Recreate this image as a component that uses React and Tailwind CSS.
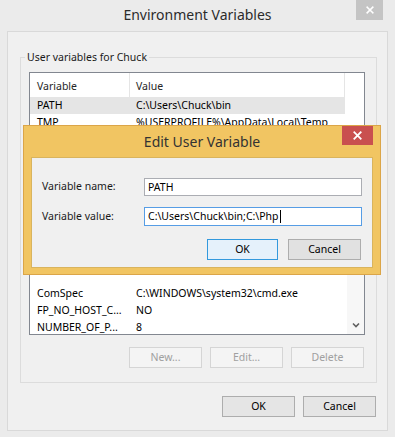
import React from "react";

function XIcon({ size = 9 }) {
  return (
    <svg width={size} height={size} viewBox="0 0 10 10">
      <path d="M1.5 1.5 L8.5 8.5 M8.5 1.5 L1.5 8.5" stroke="white" strokeWidth="2" strokeLinecap="square" />
    </svg>
  );
}

function Row({ name, value, selected }) {
  return (
    <div className={"h-[17px] leading-[17px] flex w-[315px] " + (selected ? "bg-[#e5e5e5]" : "")}>
      <div className="w-[100px] pl-[7px] whitespace-nowrap overflow-hidden">{name}</div>
      <div className="w-[215px] pl-[6px] whitespace-nowrap overflow-hidden">{value}</div>
    </div>
  );
}

function WinButton({ children, disabled, isDefault, className = "" }) {
  let cls = "h-[21px] flex items-center justify-center border ";
  if (disabled) cls += "border-[#d5d5d5] bg-[#f4f4f4] text-[#a0a0a0] ";
  else if (isDefault) cls += "border-[#3c8fd8] bg-[#e5e5e5] text-black ";
  else cls += "border-[#adadad] bg-[#e1e1e1] text-black ";
  return <div className={cls + className}>{children}</div>;
}

export default function App() {
  return (
    <div className="w-[395px] h-[437px] bg-[#ebebeb] relative overflow-hidden font-['Noto_Sans',sans-serif] text-[10.5px] text-black">
      {/* Title bar */}
      <div className="h-[31px] grid grid-cols-[1fr_auto_1fr]">
        <div />
        <div className="pt-[4px] text-[14px] leading-[22px] text-[#2b2b2b]">Environment Variables</div>
        <div className="flex justify-end pr-[12px]">
          <div className="w-[27px] h-[20px] bg-[#c4c4c4] flex items-center justify-center">
            <XIcon size={8} />
          </div>
        </div>
      </div>

      {/* Client area */}
      <div className="mx-[7px] h-[400px] border border-[#d9d9d9] bg-[#f0f0f0] flex flex-col">
        <fieldset className="ml-[12px] mr-[10px] mt-[17px] border border-[#dcdcdc] pl-[8px] pr-[11px] pb-[14px]">
          <legend className="ml-[-4px] px-[2px] leading-[16px] text-[#1a1a1a]">User variables for Chuck</legend>
          <div className="mt-[7px] flex flex-col">
            {/* user variables list */}
            <div className="h-[128px] border-t border-x border-[#828790] bg-white flex flex-col">
              <div className="h-[24px] flex text-[#262626]">
                <div className="w-[100px] pl-[7px] leading-[26px] border-r border-[#e5e5e5]">Variable</div>
                <div className="w-[215px] pl-[6px] leading-[26px] border-r border-[#e5e5e5]">Value</div>
              </div>
              <Row name="PATH" value="C:\Users\Chuck\bin" selected />
              <Row name="TMP" value="%USERPROFILE%\AppData\Local\Temp" />
            </div>
            {/* system variables list (partially hidden) */}
            <div className="h-[135px] border-b border-x border-[#828790] bg-white flex overflow-hidden">
              <div className="flex-1 pt-[85px] flex flex-col">
                <Row name="ComSpec" value="C:\WINDOWS\system32\cmd.exe" />
                <Row name="FP_NO_HOST_C..." value="NO" />
                <Row name="NUMBER_OF_P..." value="8" />
              </div>
              <div className="w-[17px] bg-[#f7f7f7] flex flex-col justify-end">
                <div className="h-[17px] flex items-center justify-center pb-[2px]">
                  <svg width="8" height="6" viewBox="0 0 8 6">
                    <path d="M1 1.5 L4 4.5 L7 1.5" stroke="#606060" strokeWidth="1.6" fill="none" />
                  </svg>
                </div>
              </div>
            </div>
          </div>
          <div className="mt-[12px] flex justify-end gap-[8px] pr-[1px]">
            <WinButton disabled className="w-[73px]">New...</WinButton>
            <WinButton disabled className="w-[73px]">Edit...</WinButton>
            <WinButton disabled className="w-[73px]">Delete</WinButton>
          </div>
        </fieldset>
        <div className="mt-[13px] mr-[11px] flex justify-end gap-[8px]">
          <WinButton className="w-[73px] bg-[#e5e5e5] border-[#acacac]">OK</WinButton>
          <WinButton className="w-[73px] bg-[#e5e5e5] border-[#acacac]">Cancel</WinButton>
        </div>
      </div>

      {/* Edit User Variable dialog */}
      <div className="absolute left-[23px] top-[125px] w-[358px] h-[150px] bg-[#f1c562] border border-[#dba548] flex flex-col">
        <div className="h-[31px] grid grid-cols-[1fr_auto_1fr]">
          <div />
          <div className="pt-[5px] text-[14px] leading-[22px] text-[#333333]">Edit User Variable</div>
          <div className="flex justify-end pr-[7px]">
            <div className="w-[31px] h-[19px] bg-[#c9504f] flex items-center justify-center">
              <XIcon size={9} />
            </div>
          </div>
        </div>
        <div className="mx-[7px] h-[111px] border border-[#d9b45e] bg-[#f0f0f0] flex flex-col px-[10px] pt-[20px]">
          <div className="flex items-center h-[18px]">
            <div className="w-[102px] text-[#1a1a1a]">Variable name:</div>
            <div className="flex-1 h-[18px] border border-[#abadb3] bg-white pl-[3px] leading-[16px]">PATH</div>
          </div>
          <div className="flex items-center h-[19px] mt-[11px]">
            <div className="w-[102px] text-[#1a1a1a]">Variable value:</div>
            <div className="flex-1 h-[19px] border border-[#569de5] bg-white pl-[3px] leading-[17px] flex items-center">
              <span>C:\Users\Chuck\bin;C:\Php</span>
              <span className="w-[1px] h-[13px] bg-black ml-[1px]" />
            </div>
          </div>
          <div className="mt-[13px] flex justify-end gap-[10px] pr-[1px]">
            <WinButton isDefault className="w-[71px] bg-[#e5f1fb] border-[#3399dd]">OK</WinButton>
            <WinButton className="w-[73px]">Cancel</WinButton>
          </div>
        </div>
      </div>
    </div>
  );
}
